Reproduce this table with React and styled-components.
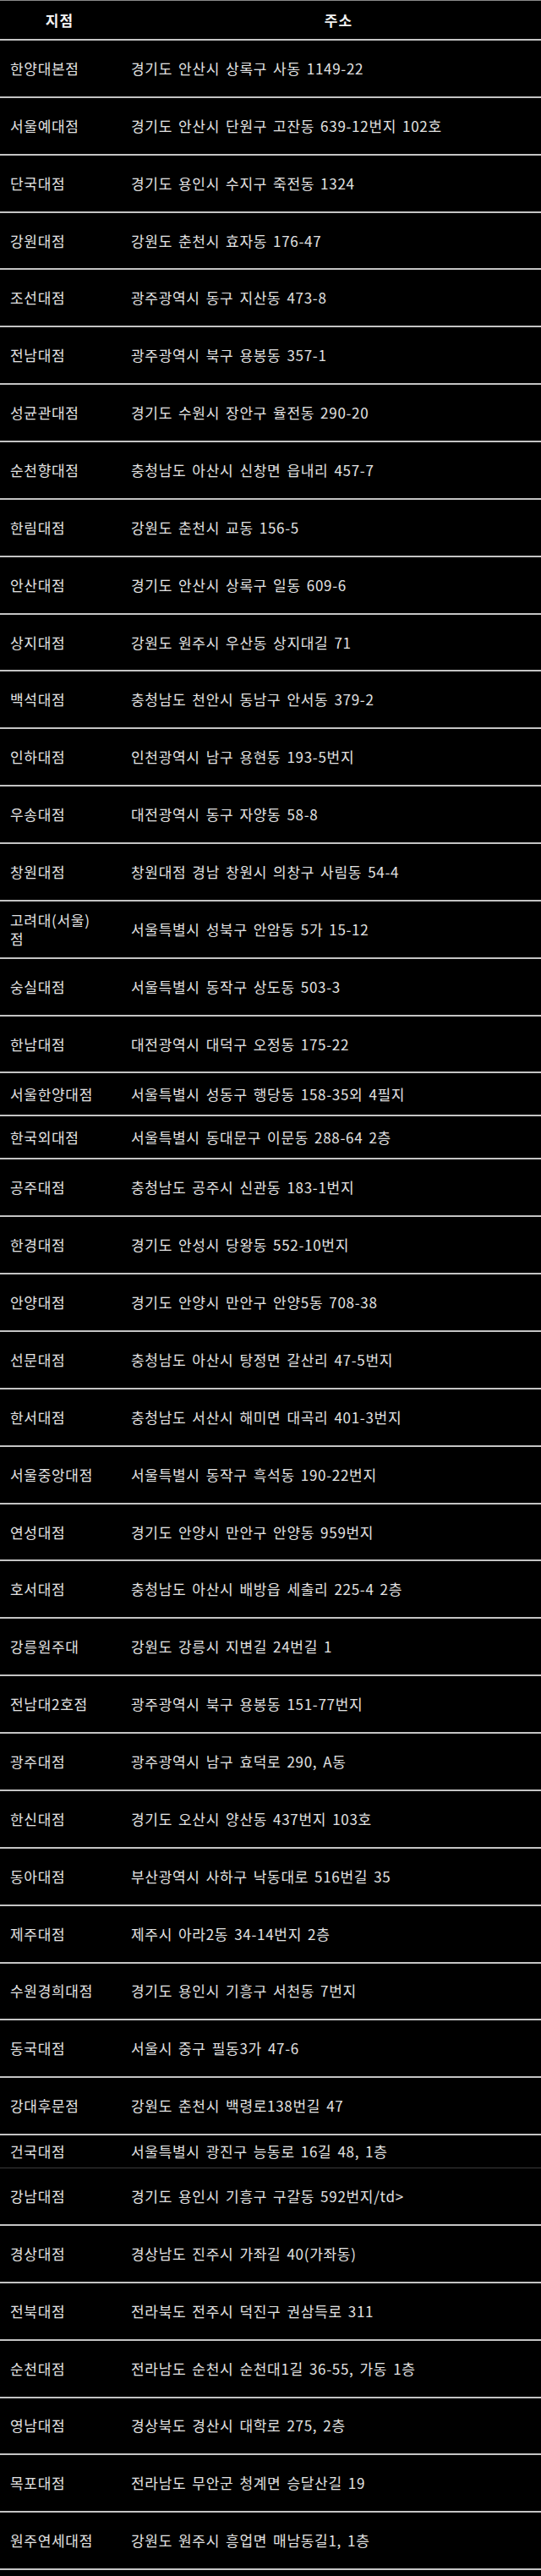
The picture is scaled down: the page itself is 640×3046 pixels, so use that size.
import React from "react";
import styled, { createGlobalStyle, css } from "styled-components";

const GlobalStyle = createGlobalStyle`
  html, body {
    margin: 0;
    padding: 0;
    background: #000;
  }
  body {
    font-family: "Noto Sans CJK KR", "Noto Sans", "Liberation Sans", sans-serif;
    color: #e2e2e2;
  }
`;

const ROW_H = 67.86;

const TableStyled = styled.div`
  width: 640px;
  min-height: 3046px;
  background: #000;
  display: flex;
  flex-direction: column;
`;

const HeaderRow = styled.div`
  display: grid;
  grid-template-columns: 141px 1fr;
  height: 48px;
  box-sizing: border-box;
  border-top: 1px solid #8a8a8a;
  border-bottom: 2px solid #c4c4c4;
  align-items: center;
`;

const HeaderCell = styled.div`
  font-size: 17px;
  font-weight: 700;
  color: #f2f2f2;
  text-align: center;
  padding-left: ${(p) => (p.$wide ? "20px" : "0")};
  letter-spacing: 1px;
`;

const rowHeights = {
  normal: `${ROW_H}px`,
  mid: "51px",
  tight: "39px",
};

const Row = styled.div`
  display: grid;
  grid-template-columns: 141px 1fr;
  align-items: center;
  box-sizing: border-box;
  height: ${(p) => rowHeights[p.$variant]};
  border-bottom: 2px solid #c4c4c4;
  ${(p) =>
    p.$variant === "tight" &&
    css`
      border-bottom: 1px solid #3a3a3a;
    `}
`;

const cellText = css`
  font-size: 17px;
  line-height: 22px;
  letter-spacing: 0.7px;
  word-spacing: 2.5px;
`;

const NameCell = styled.div`
  ${cellText}
  padding: 0 24px 0 12px;
`;

const AddrCell = styled.div`
  ${cellText}
  padding: 0 12px 0 14px;
  white-space: nowrap;
`;

const stores = [
  ["한양대본점", "경기도 안산시 상록구 사동 1149-22"],
  ["서울예대점", "경기도 안산시 단원구 고잔동 639-12번지 102호"],
  ["단국대점", "경기도 용인시 수지구 죽전동 1324"],
  ["강원대점", "강원도 춘천시 효자동 176-47"],
  ["조선대점", "광주광역시 동구 지산동 473-8"],
  ["전남대점", "광주광역시 북구 용봉동 357-1"],
  ["성균관대점", "경기도 수원시 장안구 율전동 290-20"],
  ["순천향대점", "충청남도 아산시 신창면 읍내리 457-7"],
  ["한림대점", "강원도 춘천시 교동 156-5"],
  ["안산대점", "경기도 안산시 상록구 일동 609-6"],
  ["상지대점", "강원도 원주시 우산동 상지대길 71"],
  ["백석대점", "충청남도 천안시 동남구 안서동 379-2"],
  ["인하대점", "인천광역시 남구 용현동 193-5번지"],
  ["우송대점", "대전광역시 동구 자양동 58-8"],
  ["창원대점", "창원대점 경남 창원시 의창구 사림동 54-4"],
  ["고려대(서울)점", "서울특별시 성북구 안암동 5가 15-12"],
  ["숭실대점", "서울특별시 동작구 상도동 503-3"],
  ["한남대점", "대전광역시 대덕구 오정동 175-22"],
  ["서울한양대점", "서울특별시 성동구 행당동 158-35외 4필지", "mid"],
  ["한국외대점", "서울특별시 동대문구 이문동 288-64 2층", "mid"],
  ["공주대점", "충청남도 공주시 신관동 183-1번지"],
  ["한경대점", "경기도 안성시 당왕동 552-10번지"],
  ["안양대점", "경기도 안양시 만안구 안양5동 708-38"],
  ["선문대점", "충청남도 아산시 탕정면 갈산리 47-5번지"],
  ["한서대점", "충청남도 서산시 해미면 대곡리 401-3번지"],
  ["서울중앙대점", "서울특별시 동작구 흑석동 190-22번지"],
  ["연성대점", "경기도 안양시 만안구 안양동 959번지"],
  ["호서대점", "충청남도 아산시 배방읍 세출리 225-4 2층"],
  ["강릉원주대", "강원도 강릉시 지변길 24번길 1"],
  ["전남대2호점", "광주광역시 북구 용봉동 151-77번지"],
  ["광주대점", "광주광역시 남구 효덕로 290, A동"],
  ["한신대점", "경기도 오산시 양산동 437번지 103호"],
  ["동아대점", "부산광역시 사하구 낙동대로 516번길 35"],
  ["제주대점", "제주시 아라2동 34-14번지 2층"],
  ["수원경희대점", "경기도 용인시 기흥구 서천동 7번지"],
  ["동국대점", "서울시 중구 필동3가 47-6"],
  ["강대후문점", "강원도 춘천시 백령로138번길 47"],
  ["건국대점", "서울특별시 광진구 능동로 16길 48, 1층", "tight"],
  ["강남대점", "경기도 용인시 기흥구 구갈동 592번지/td>"],
  ["경상대점", "경상남도 진주시 가좌길 40(가좌동)"],
  ["전북대점", "전라북도 전주시 덕진구 권삼득로 311"],
  ["순천대점", "전라남도 순천시 순천대1길 36-55, 가동 1층"],
  ["영남대점", "경상북도 경산시 대학로 275, 2층"],
  ["목포대점", "전라남도 무안군 청계면 승달산길 19"],
  ["원주연세대점", "강원도 원주시 흥업면 매남동길1, 1층"],
];

export default function App() {
  return (
    <>
      <GlobalStyle />
      <TableStyled>
        <HeaderRow>
          <HeaderCell>지점</HeaderCell>
          <HeaderCell $wide>주소</HeaderCell>
        </HeaderRow>
        {stores.map(([name, addr, variant]) => (
          <Row key={name} $variant={variant || "normal"}>
            <NameCell>{name}</NameCell>
            <AddrCell>{addr}</AddrCell>
          </Row>
        ))}
      </TableStyled>
    </>
  );
}
